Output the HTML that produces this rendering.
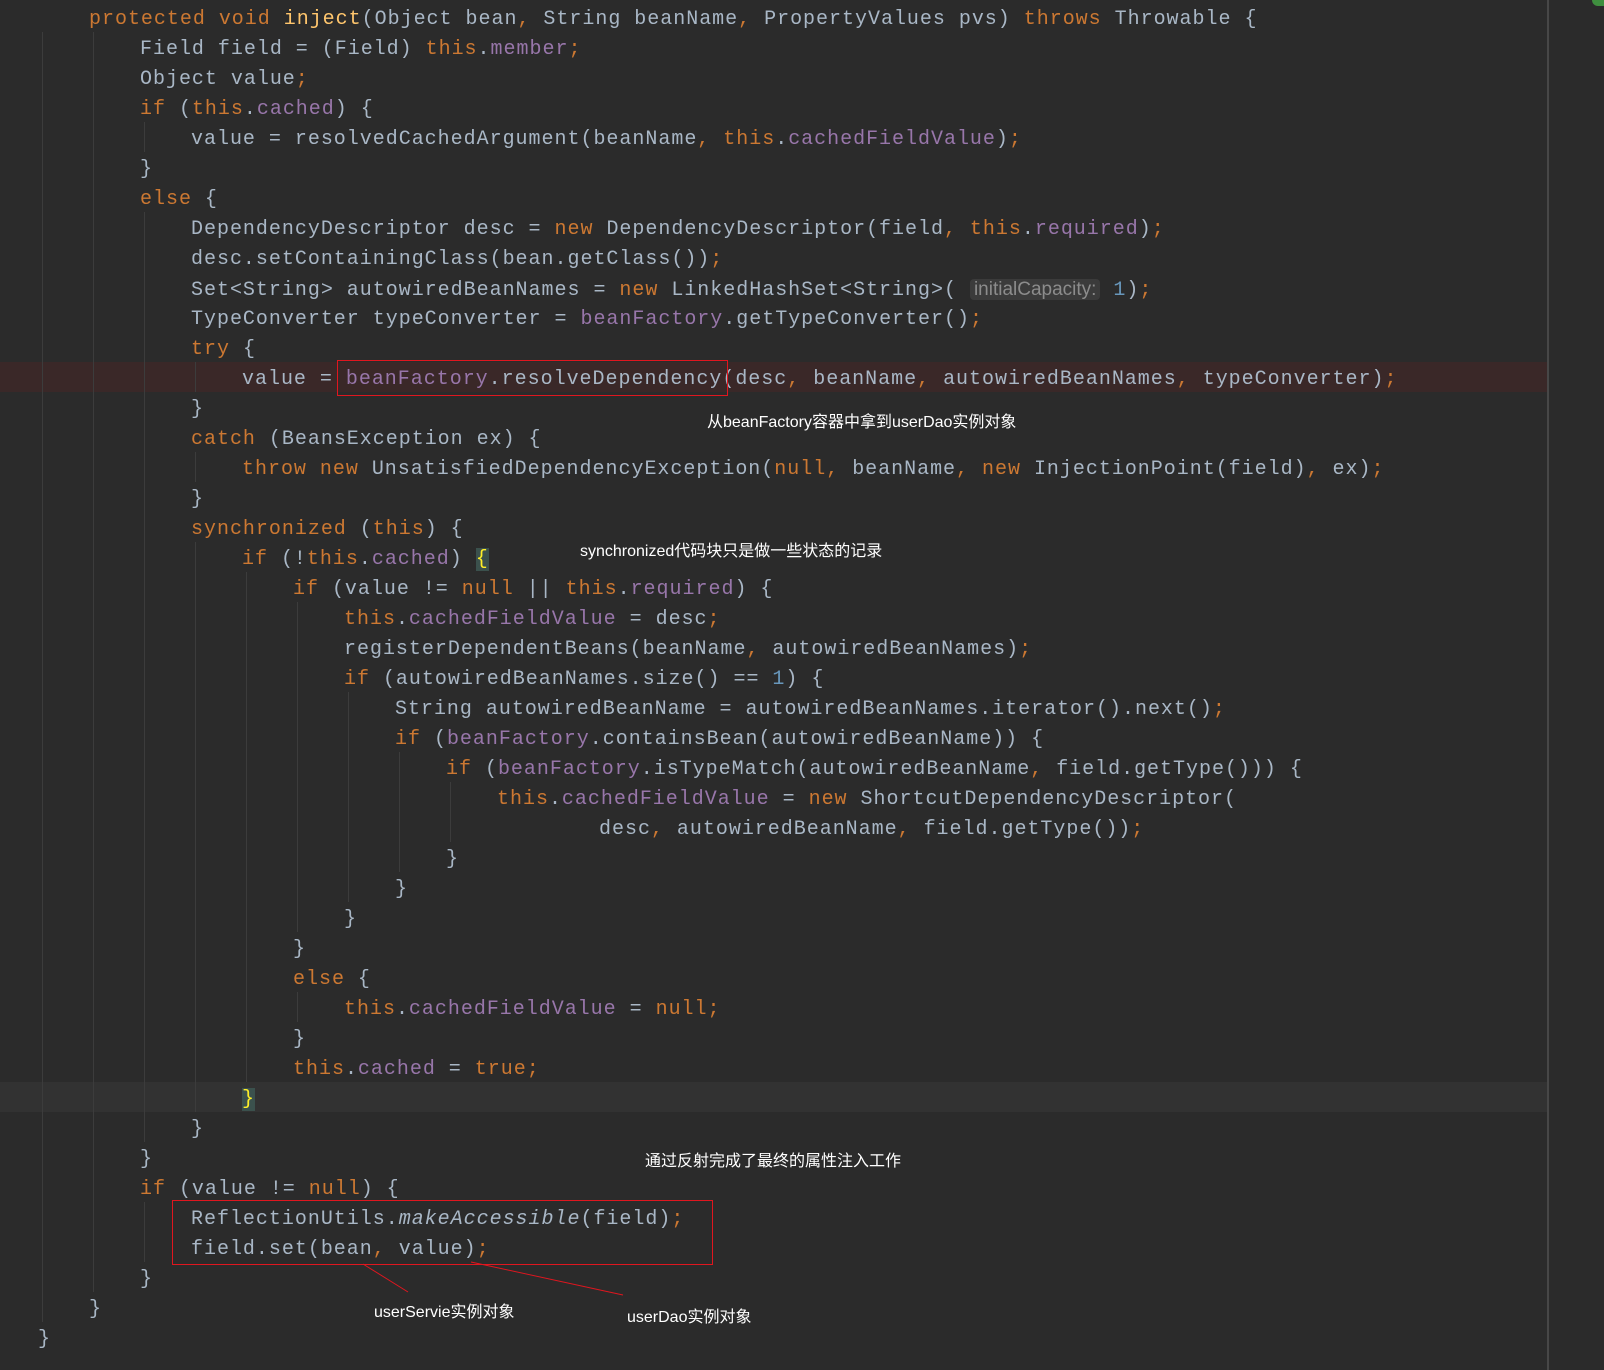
<!DOCTYPE html>
<html><head><meta charset="utf-8"><style>
body{margin:0;width:1604px;height:1370px;background:#2b2b2b;overflow:hidden;position:relative;font-family:"Liberation Mono",monospace;}
.l{position:absolute;height:30px;line-height:30px;font-size:20px;letter-spacing:0.98px;color:#a9b7c6;white-space:pre;}
.k{color:#cc7832}.f{color:#9876aa}.n{color:#6897bb}.m{color:#ffc66d}.i{font-style:italic}
.h{font-family:"Liberation Sans",sans-serif;font-size:19px;letter-spacing:0;color:#8c8c8c;background:#3b3b3b;border-radius:4px;padding:0 4px}
.b{color:#ffef28;background:#3b514d}
.g{position:absolute;width:1px;background:#3c3c3c}
.row{position:absolute;left:0;width:1547px;height:30px}
.box{position:absolute;border:1.5px solid #e0161f}
.a{position:absolute;color:#fff;font-family:"Liberation Sans","Noto Sans CJK SC",sans-serif;font-size:16px;white-space:nowrap}
.w{position:absolute;left:0;top:3px;width:1604px;height:1367px}
</style></head><body>
<div class="row" style="top:362px;background:#3a2828"></div>
<div class="row" style="top:1082px;background:#323232"></div>
<div style="position:absolute;left:1547px;top:0;width:2px;height:1370px;background:#474747"></div>
<div style="position:absolute;left:1592px;top:0;width:12px;height:6px;background:#3f8f3f;border-radius:0 0 0 6px"></div>

<div class="g" style="left:42px;top:32px;height:1290px"></div>
<div class="g" style="left:93px;top:32px;height:1260px"></div>
<div class="g" style="left:144px;top:122px;height:30px"></div>
<div class="g" style="left:144px;top:212px;height:930px"></div>
<div class="g" style="left:144px;top:1202px;height:60px"></div>
<div class="g" style="left:195px;top:362px;height:30px"></div>
<div class="g" style="left:195px;top:452px;height:30px"></div>
<div class="g" style="left:195px;top:542px;height:570px"></div>
<div class="g" style="left:246px;top:572px;height:510px"></div>
<div class="g" style="left:297px;top:602px;height:330px"></div>
<div class="g" style="left:297px;top:992px;height:30px"></div>
<div class="g" style="left:348px;top:692px;height:210px"></div>
<div class="g" style="left:399px;top:752px;height:120px"></div>
<div class="g" style="left:450px;top:782px;height:60px"></div>

<div class="w">
<div class="l" style="top:2px;left:89px"><span class="k">protected void </span><span class="m">inject</span>(Object bean<span class="k">, </span>String beanName<span class="k">, </span>PropertyValues pvs) <span class="k">throws </span>Throwable {</div>
<div class="l" style="top:32px;left:140px">Field field = (Field) <span class="k">this</span>.<span class="f">member</span><span class="k">;</span></div>
<div class="l" style="top:62px;left:140px">Object value<span class="k">;</span></div>
<div class="l" style="top:92px;left:140px"><span class="k">if </span>(<span class="k">this</span>.<span class="f">cached</span>) {</div>
<div class="l" style="top:122px;left:191px">value = resolvedCachedArgument(beanName<span class="k">, this</span>.<span class="f">cachedFieldValue</span>)<span class="k">;</span></div>
<div class="l" style="top:152px;left:140px">}</div>
<div class="l" style="top:182px;left:140px"><span class="k">else </span>{</div>
<div class="l" style="top:212px;left:191px">DependencyDescriptor desc = <span class="k">new </span>DependencyDescriptor(field<span class="k">, this</span>.<span class="f">required</span>)<span class="k">;</span></div>
<div class="l" style="top:242px;left:191px">desc.setContainingClass(bean.getClass())<span class="k">;</span></div>
<div class="l" style="top:272px;left:191px">Set&lt;String&gt; autowiredBeanNames = <span class="k">new </span>LinkedHashSet&lt;String&gt;( <span class="h">initialCapacity:</span> <span class="n">1</span>)<span class="k">;</span></div>
<div class="l" style="top:302px;left:191px">TypeConverter typeConverter = <span class="f">beanFactory</span>.getTypeConverter()<span class="k">;</span></div>
<div class="l" style="top:332px;left:191px"><span class="k">try </span>{</div>
<div class="l" style="top:362px;left:242px">value = <span class="f">beanFactory</span>.resolveDependency(desc<span class="k">, </span>beanName<span class="k">, </span>autowiredBeanNames<span class="k">, </span>typeConverter)<span class="k">;</span></div>
<div class="l" style="top:392px;left:191px">}</div>
<div class="l" style="top:422px;left:191px"><span class="k">catch </span>(BeansException ex) {</div>
<div class="l" style="top:452px;left:242px"><span class="k">throw new </span>UnsatisfiedDependencyException(<span class="k">null, </span>beanName<span class="k">, new </span>InjectionPoint(field)<span class="k">, </span>ex)<span class="k">;</span></div>
<div class="l" style="top:482px;left:191px">}</div>
<div class="l" style="top:512px;left:191px"><span class="k">synchronized </span>(<span class="k">this</span>) {</div>
<div class="l" style="top:542px;left:242px"><span class="k">if </span>(!<span class="k">this</span>.<span class="f">cached</span>) <span class="b">{</span></div>
<div class="l" style="top:572px;left:293px"><span class="k">if </span>(value != <span class="k">null </span>|| <span class="k">this</span>.<span class="f">required</span>) {</div>
<div class="l" style="top:602px;left:344px"><span class="k">this</span>.<span class="f">cachedFieldValue</span> = desc<span class="k">;</span></div>
<div class="l" style="top:632px;left:344px">registerDependentBeans(beanName<span class="k">, </span>autowiredBeanNames)<span class="k">;</span></div>
<div class="l" style="top:662px;left:344px"><span class="k">if </span>(autowiredBeanNames.size() == <span class="n">1</span>) {</div>
<div class="l" style="top:692px;left:395px">String autowiredBeanName = autowiredBeanNames.iterator().next()<span class="k">;</span></div>
<div class="l" style="top:722px;left:395px"><span class="k">if </span>(<span class="f">beanFactory</span>.containsBean(autowiredBeanName)) {</div>
<div class="l" style="top:752px;left:446px"><span class="k">if </span>(<span class="f">beanFactory</span>.isTypeMatch(autowiredBeanName<span class="k">, </span>field.getType())) {</div>
<div class="l" style="top:782px;left:497px"><span class="k">this</span>.<span class="f">cachedFieldValue</span> = <span class="k">new </span>ShortcutDependencyDescriptor(</div>
<div class="l" style="top:812px;left:599px">desc<span class="k">, </span>autowiredBeanName<span class="k">, </span>field.getType())<span class="k">;</span></div>
<div class="l" style="top:842px;left:446px">}</div>
<div class="l" style="top:872px;left:395px">}</div>
<div class="l" style="top:902px;left:344px">}</div>
<div class="l" style="top:932px;left:293px">}</div>
<div class="l" style="top:962px;left:293px"><span class="k">else </span>{</div>
<div class="l" style="top:992px;left:344px"><span class="k">this</span>.<span class="f">cachedFieldValue</span> = <span class="k">null;</span></div>
<div class="l" style="top:1022px;left:293px">}</div>
<div class="l" style="top:1052px;left:293px"><span class="k">this</span>.<span class="f">cached</span> = <span class="k">true;</span></div>
<div class="l" style="top:1082px;left:242px"><span class="b">}</span></div>
<div class="l" style="top:1112px;left:191px">}</div>
<div class="l" style="top:1142px;left:140px">}</div>
<div class="l" style="top:1172px;left:140px"><span class="k">if </span>(value != <span class="k">null</span>) {</div>
<div class="l" style="top:1202px;left:191px">ReflectionUtils.<span class="i">makeAccessible</span>(field)<span class="k">;</span></div>
<div class="l" style="top:1232px;left:191px">field.set(bean<span class="k">, </span>value)<span class="k">;</span></div>
<div class="l" style="top:1262px;left:140px">}</div>
<div class="l" style="top:1292px;left:89px">}</div>
<div class="l" style="top:1322px;left:38px">}</div>
</div>

<div class="box" style="left:337px;top:360px;width:389px;height:34px"></div>
<div class="box" style="left:172px;top:1200px;width:539px;height:63px"></div>
<svg style="position:absolute;left:0;top:0" width="1604" height="1370"><line x1="363" y1="1264" x2="408" y2="1292" stroke="#e0161f" stroke-width="1"/><line x1="471" y1="1262" x2="623" y2="1295" stroke="#e0161f" stroke-width="1"/></svg>
<div class="a" style="left:707px;top:408px">从beanFactory容器中拿到userDao实例对象</div>
<div class="a" style="left:580px;top:537px">synchronized代码块只是做一些状态的记录</div>
<div class="a" style="left:645px;top:1147px">通过反射完成了最终的属性注入工作</div>
<div class="a" style="left:374px;top:1298px">userServie实例对象</div>
<div class="a" style="left:627px;top:1303px">userDao实例对象</div>
</body></html>
